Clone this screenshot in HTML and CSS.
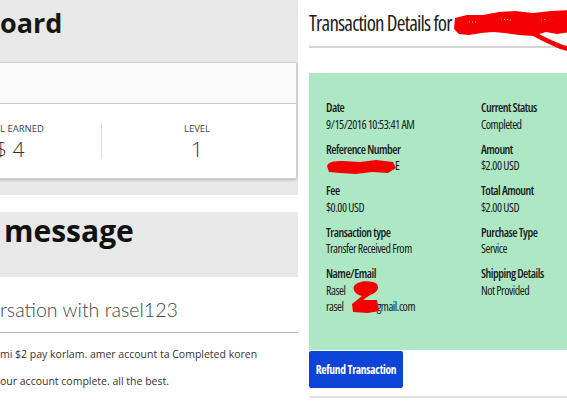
FILE: index.html
```html
<!DOCTYPE html>
<html>
<head>
<meta charset="utf-8">
<link rel="stylesheet" href="styles.css">
</head>
<body>
<div class="page">
  <section class="left">
    <div class="dash">
      <h1 class="dash-title">oard</h1>
      <div class="card">
        <div class="card-head"></div>
        <div class="card-stats">
          <div class="stat stat-earned">
            <div class="stat-label">L EARNED</div>
            <div class="stat-value earned-value">$ 4</div>
          </div>
          <div class="stat-divider"></div>
          <div class="stat stat-level">
            <div class="stat-label">LEVEL</div>
            <div class="stat-value">1</div>
          </div>
        </div>
      </div>
    </div>
    <div class="msg-head"><h2 class="msg-title">message</h2></div>
    <div class="conv"><h3 class="conv-title">rsation with rasel123</h3></div>
    <p class="msg-line">mi $2 pay korlam. amer account ta Completed koren</p>
    <p class="msg-line">our account complete. all the best.</p>
  </section>

  <section class="right">
    <div class="tx-title-wrap">
      <h2 class="tx-title">Transaction Details for</h2>
      <svg class="redact-title" width="118" height="44" viewBox="0 0 118 44">
        <path d="M2,8 L14,5 L30,5 L46,2 L62,1 L80,3 L98,1 L118,0 L118,22 L104,24 L93,22 L86,24 C94,28 102,32 110,35 L118,37 L118,42 L107,39 C97,35 88,30 80,26 L66,25 L52,23 L40,22 L28,23 L16,25 L6,24 L1,19 Z" fill="#f50000"/>
        <path d="M16,12 L24,12 M48,9 L58,10 M88,10 L94,9" stroke="#ffd0d0" stroke-width="1" stroke-dasharray="1 2"/>
      </svg>
    </div>

    <div class="tx-box">
      <div class="tx-grid">
        <div class="tx-cell"><div class="tx-label">Date</div><div class="tx-value">9/15/2016 10:53:41 AM</div></div>
        <div class="tx-cell"><div class="tx-label">Current Status</div><div class="tx-value">Completed</div></div>
        <div class="tx-cell"><div class="tx-label">Reference Number</div><div class="tx-value"><svg class="redact-ref" width="70" height="14" viewBox="0 0 70 14"><path d="M1,6 C2,2 8,1 16,1 L34,2 L50,0 L67,2 L70,8 L62,13 L46,12 L30,14 L14,13 L3,12 Z" fill="#f50000"/></svg>E</div></div>
        <div class="tx-cell"><div class="tx-label">Amount</div><div class="tx-value">$2.00 USD</div></div>
        <div class="tx-cell"><div class="tx-label">Fee</div><div class="tx-value">$0.00 USD</div></div>
        <div class="tx-cell"><div class="tx-label">Total Amount</div><div class="tx-value">$2.00 USD</div></div>
        <div class="tx-cell"><div class="tx-label">Transaction type</div><div class="tx-value">Transfer Received From</div></div>
        <div class="tx-cell"><div class="tx-label">Purchase Type</div><div class="tx-value">Service</div></div>
        <div class="tx-cell tx-name">
          <div class="tx-label">Name/Email</div>
          <div class="tx-value">Rasel</div>
          <div class="tx-value">rasel<span class="email-gap"></span>@gmail.com</div>
          <svg class="redact-name" width="30" height="34" viewBox="0 0 30 34">
            <path d="M4,6 C8,0 22,0 27,4 C30,9 26,13 20,15 L13,20 L27,20 L29,31 L18,33 L3,32 L2,24 L12,16 C7,15 2,11 4,6 Z" fill="#f50000"/>
          </svg>
        </div>
        <div class="tx-cell"><div class="tx-label">Shipping Details</div><div class="tx-value">Not Provided</div></div>
      </div>
    </div>
    <div class="tx-actions">
      <button class="btn-refund">Refund Transaction</button>
    </div>
  </section>
</div>
</body>
</html>
```
FILE: styles.css
```css
html, body {
  margin: 0;
  padding: 0;
  background: #ffffff;
}
body {
  width: 567px;
  height: 410px;
  overflow: hidden;
  font-family: "Open Sans", "Liberation Sans", sans-serif;
  color: #222;
}
.page {
  display: flex;
  width: 567px;
  height: 410px;
}
.left {
  width: 298px;
  flex: none;
  overflow: hidden;
}
.dash {
  background: #e8e8e8;
  height: 195px;
  padding-top: 7px;
  box-sizing: border-box;
}
.dash-title {
  margin: 0;
  font-size: 27px;
  line-height: 32px;
  font-weight: 700;
  color: #161616;
}
.card {
  margin-top: 23px;
  margin-left: -10px;
  width: 307px;
  background: #fff;
  border: 1px solid #cfcfcf;
  border-radius: 2px;
  box-shadow: 0 1px 3px rgba(0,0,0,0.22);
  box-sizing: border-box;
}
.card-head {
  height: 40px;
  background: #fafafa;
  border-bottom: 1px solid #cccccc;
}
.card-stats {
  display: flex;
  align-items: flex-start;
  height: 74px;
  padding-top: 19px;
  box-sizing: border-box;
}
.stat-earned {
  width: 110px;
  padding-left: 9px;
  box-sizing: border-box;
  white-space: nowrap;
}
.stat-divider {
  width: 1px;
  height: 36px;
  background: #dedede;
}
.stat-level {
  flex: 1;
  text-align: center;
  padding-right: 4px;
}
.stat-label {
  font-size: 9.5px;
  line-height: 12px;
  color: #444;
  text-transform: uppercase;
}
.stat-value {
  margin-top: 2px;
  font-size: 21px;
  line-height: 24px;
  font-weight: 300;
  color: #333;
}
.earned-value {
  margin-left: -5px;
}
.msg-head {
  margin-top: 17px;
  height: 65px;
  background: #e8e8e8;
  padding-top: 1px;
  box-sizing: border-box;
}
.msg-title {
  margin: 0 0 0 4px;
  font-size: 30px;
  line-height: 36px;
  font-weight: 700;
  color: #111;
}
.conv {
  margin-top: 20px;
  padding-bottom: 9px;
  border-bottom: 1px solid #b8b8b8;
}
.conv-title {
  margin: 0;
  font-family: "Lato", "Open Sans", sans-serif;
  font-weight: 300;
  font-size: 19.6px;
  line-height: 26px;
  color: #444;
}
.msg-line {
  margin: 0;
  font-size: 10.5px;
  line-height: 27px;
  color: #333;
}
.conv + .msg-line {
  margin-top: 8px;
}

/* right */
.right {
  flex: 1;
  overflow: hidden;
  padding-left: 11px;
}
.tx-title-wrap {
  position: relative;
  padding-top: 8px;
  padding-bottom: 8px;
  border-bottom: 2px solid #d4d4d4;
}
.tx-title {
  margin: 0;
  font-size: 21px;
  line-height: 30px;
  font-weight: 400;
  font-stretch: 75%;
  letter-spacing: -0.8px;
  color: #222;
  white-space: nowrap;
}
.redact-title {
  position: absolute;
  left: 144px;
  top: 10px;
}
.tx-box {
  margin-top: 25px;
  width: 320px;
  background: #ade7c4;
  padding: 27px 0 34px 17px;
  box-sizing: border-box;
}
.tx-grid {
  display: grid;
  grid-template-columns: 155px 1fr;
  row-gap: 8.5px;
}
.tx-cell {
  position: relative;
}
.tx-label, .tx-value {
  font-size: 12px;
  line-height: 16.5px;
  font-stretch: 75%;
  letter-spacing: -0.5px;
  color: #1a1a1a;
  white-space: nowrap;
}
.tx-label {
  font-weight: 600;
}
.redact-ref {
  display: inline-block;
  vertical-align: middle;
  margin-right: -1px;
}
.email-gap {
  display: inline-block;
  width: 26px;
}
.redact-name {
  position: absolute;
  left: 24px;
  top: 14px;
}
.tx-actions {
  margin-top: 1px;
  padding-bottom: 8px;
  border-bottom: 2px solid #e2e2e2;
}
.btn-refund {
  display: block;
  width: 94px;
  height: 37px;
  background: #0b44d6;
  border: none;
  border-radius: 2px;
  color: #fff;
  font-family: "Open Sans", "Liberation Sans", sans-serif;
  font-size: 11.5px;
  font-weight: 700;
  font-stretch: 75%;
  letter-spacing: -0.3px;
  padding: 0;
}
```
